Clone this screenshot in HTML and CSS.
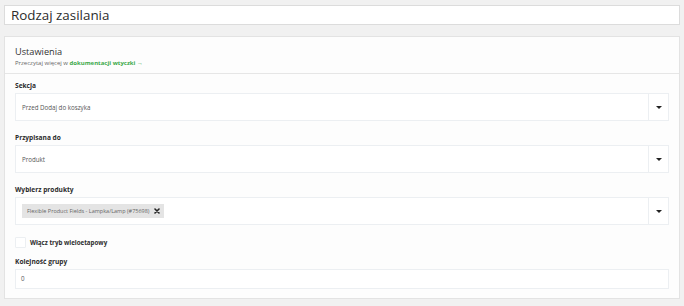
FILE: index.html
```html
<!DOCTYPE html>
<html lang="pl">
<head>
    <meta charset="UTF-8">
    <meta name="viewport" content="width=device-width, initial-scale=1.0">
    <title>Rodzaj zasilania</title>
    <link rel="stylesheet" href="styles.css">
</head>
<body>

<div class="title-input">Rodzaj zasilania</div>

<div class="card">
    <div class="card-header">
        <div class="card-title">Ustawienia</div>
        <div class="card-desc">Przeczytaj więcej w <a href="#">dokumentacji wtyczki →</a></div>
    </div>

    <div class="card-body">
        <div class="field">
            <div class="label">Sekcja</div>
            <div class="select">
                <div class="select-value">Przed Dodaj do koszyka</div>
                <div class="select-arrow"><span></span></div>
            </div>
        </div>

        <div class="field">
            <div class="label">Przypisana do</div>
            <div class="select">
                <div class="select-value">Produkt</div>
                <div class="select-arrow"><span></span></div>
            </div>
        </div>

        <div class="field">
            <div class="label">Wybierz produkty</div>
            <div class="select">
                <div class="select-value">
                    <span class="tag">
                        Flexible Product Fields - Lampka/Lamp (#75698)
                        <svg class="tag-remove" width="6" height="6" viewBox="0 0 6 6">
                            <path d="M1 1 L5 5 M5 1 L1 5" stroke="#222" stroke-width="1.6" stroke-linecap="round"/>
                        </svg>
                    </span>
                </div>
                <div class="select-arrow"><span></span></div>
            </div>
        </div>

        <!-- checkbox -->
        <div class="check-row">
            <span class="checkbox"></span>
            <span class="check-label">Włącz tryb wieloetapowy</span>
        </div>

        <div class="field field-last">
            <div class="label">Kolejność grupy</div>
            <div class="input">0</div>
        </div>
    </div>
</div>

</body>
</html>
```

FILE: styles.css
```css
body {
    margin: 0;
    padding: 5px 4px;
    background-color: #f1f1f1;
    font-family: 'Open Sans', 'Liberation Sans', sans-serif;
    color: #333;
}

.title-input {
    height: 18px;
    line-height: 18px;
    border: 1px solid #dcdcdc;
    background-color: #fff;
    padding-left: 6px;
    font-size: 13.4px;
    color: #2c2c2c;
}

.card {
    margin-top: 11px;
    background-color: #fdfdfd;
    border: 1px solid #e3e3e3;
}

.card-header {
    height: 36px;
    padding: 0 10px;
    border-bottom: 1px solid #e6e6e6;
}

.card-title {
    font-size: 9.2px;
    padding-top: 9px;
    line-height: 12px;
    color: #333;
}

.card-desc {
    font-size: 6px;
    line-height: 10px;
    color: #666;
}

.card-desc a {
    color: #3ba94a;
    font-weight: bold;
    text-decoration: none;
}

.card-body {
    padding: 7px 10px 9px;
}

.field {
    margin-bottom: 12px;
}

.field-last {
    margin-bottom: 0;
}

.label {
    font-size: 6.6px;
    font-weight: bold;
    line-height: 10px;
    margin-bottom: 2px;
    color: #2c2c2c;
}

.select {
    display: flex;
    height: 26px;
    border: 1px solid #eceff2;
    background-color: #fff;
}

.select-value {
    flex: 1;
    display: flex;
    align-items: center;
    padding-left: 6px;
    font-size: 6.2px;
    color: #555;
}

.select-arrow {
    width: 19px;
    border-left: 1px solid #eceff2;
    display: flex;
    align-items: center;
    justify-content: center;
}

.select-arrow span {
    width: 0;
    height: 0;
    border-left: 3px solid transparent;
    border-right: 3px solid transparent;
    border-top: 3px solid #222;
}

.tag {
    display: flex;
    align-items: center;
    background-color: #e4e4e4;
    height: 14px;
    padding: 0 4px 0 5px;
    font-size: 5.5px;
    color: #666;
}

.tag-remove {
    margin-left: 5px;
}

.check-row {
    display: flex;
    align-items: center;
    height: 11px;
    margin-bottom: 9px;
}

.checkbox {
    width: 9px;
    height: 9px;
    border: 1px solid #eceff2;
    background-color: #fff;
    border-radius: 1px;
}

.check-label {
    font-size: 6.2px;
    font-weight: bold;
    margin-left: 4px;
    color: #2c2c2c;
}

.input {
    height: 18px;
    line-height: 18px;
    border: 1px solid #eceff2;
    background-color: #fff;
    padding-left: 5px;
    font-size: 6.2px;
    color: #555;
}
```
